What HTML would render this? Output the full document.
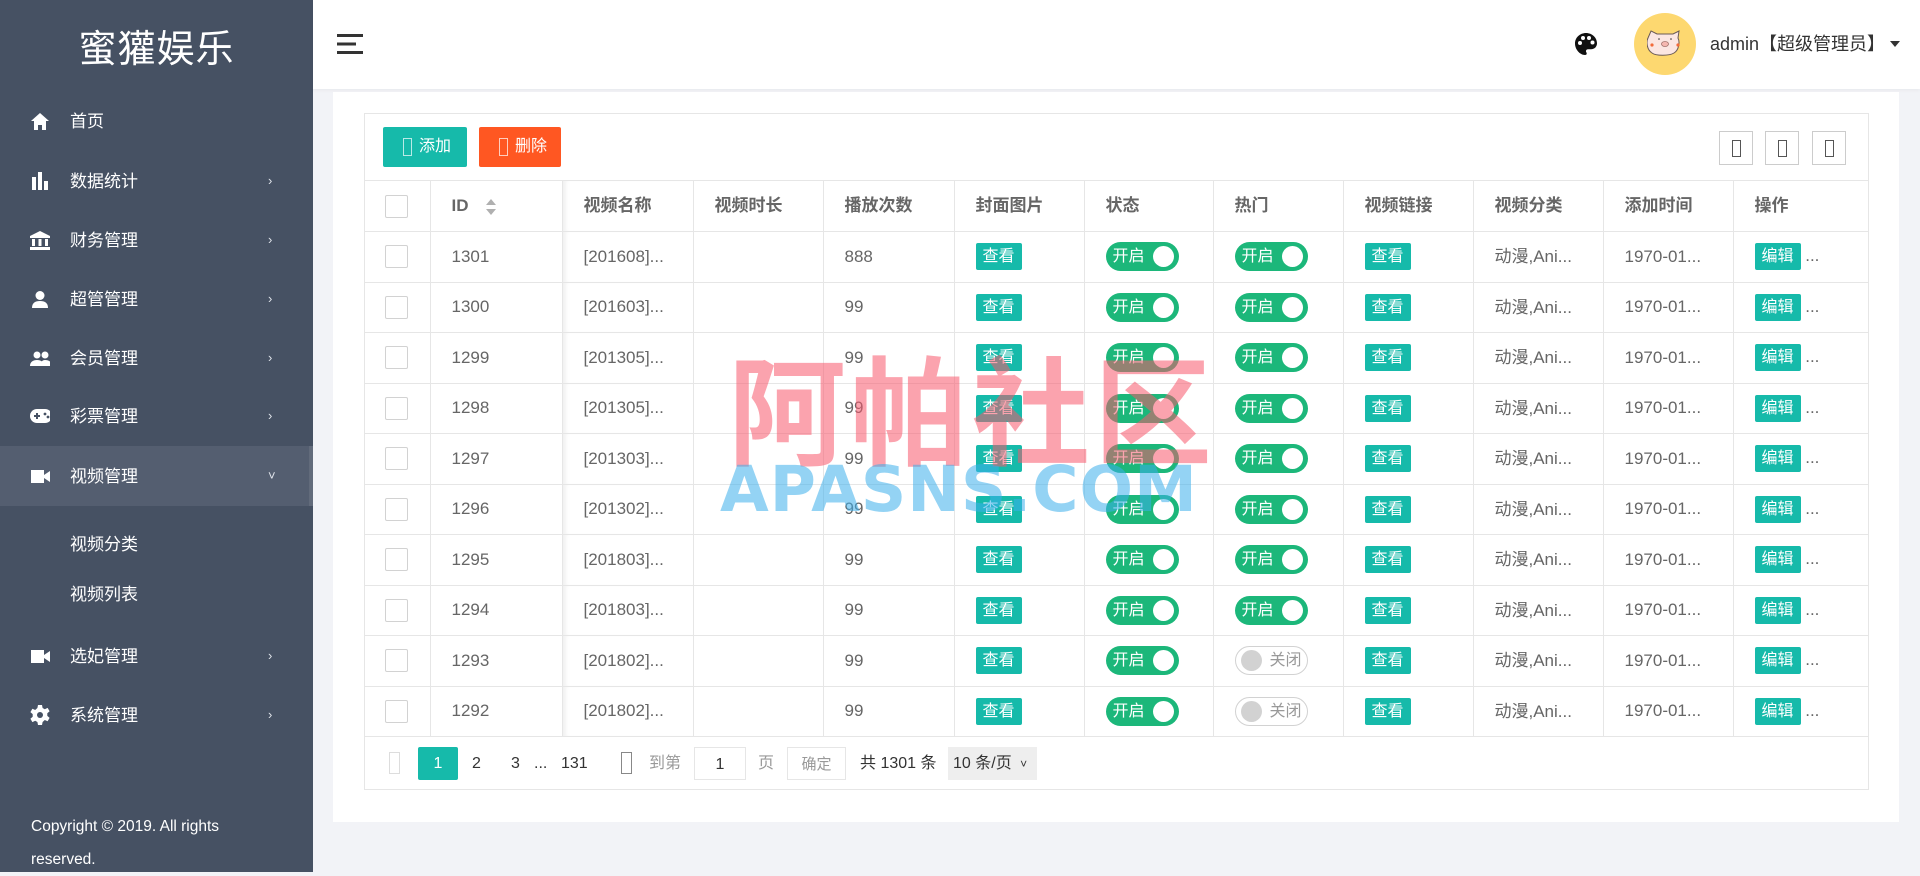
<!DOCTYPE html>
<html><head><meta charset="utf-8"><style>
*{margin:0;padding:0;box-sizing:border-box}
body{width:1920px;height:872px;overflow:hidden;background:#f2f3f7;font-family:"Liberation Sans","Noto Sans CJK SC",sans-serif;color:#666;position:relative}
.side{position:absolute;left:0;top:0;width:313px;height:872px;background:#465163;color:#fff}
.logo{position:absolute;top:18px;left:0;width:313px;text-align:center;font-size:38px;color:#fff;letter-spacing:1px}
.mi{position:absolute;left:0;width:313px;height:58px;line-height:58px;font-size:17px;color:#fff}
.mi .ic{position:absolute;left:30px;top:0;width:20px;height:58px;display:flex;align-items:center;justify-content:center}
.mi .tx{position:absolute;left:70px;top:1px}
.mi .ar{position:absolute;left:268px;font-size:13px;color:#dfe3ea}
.act{background:#545e70}
.sub{position:absolute;left:70px;font-size:17px;color:#fff}
.copy{position:absolute;left:31px;top:810px;font-size:15.5px;line-height:33px;color:#fff;width:220px}
.hdr{position:absolute;left:313px;top:0;width:1607px;height:89px;background:#fff;box-shadow:0 1px 4px rgba(0,0,0,.05)}
.card{position:absolute;left:333px;top:92px;width:1566px;height:730px;background:#fff}
.box{position:absolute;left:364px;top:113px;width:1505px;height:677px;border:1px solid #e6e6e6}
.btn{position:absolute;top:127px;height:40px;line-height:40px;color:#fff;font-size:16px;border-radius:2px;padding-left:20px}
.btn i{position:absolute;left:20px;top:11px;width:9px;height:18px;border:1px solid rgba(255,255,255,.7)}
.btn span{margin-left:16px}
.ti{position:absolute;top:131px;width:34px;height:34px;border:1px solid #ccc}
.ti i{position:absolute;left:12px;top:8px;width:9px;height:17px;border:1px solid #555}
table{position:absolute;left:364px;top:180px;border-collapse:collapse;table-layout:fixed;width:1505px}
td,th{border:1px solid #e6e6e6;height:50.5px;padding:0 0 0 21px;text-align:left;font-size:17px;line-height:22px;white-space:nowrap;overflow:hidden;vertical-align:middle}
th{height:51px;font-weight:bold;color:#666}
tr td:first-child,tr th:first-child{border-left:none}
tr td:last-child,tr th:last-child{border-right:none}
td.c3,th.c3{box-shadow:inset 6px 0 6px -4px rgba(0,0,0,.08)}
.cb{display:inline-block;width:23px;height:23px;border:1px solid #d2d2d2;border-radius:2px;vertical-align:middle;background:#fff}
.tag{display:inline-block;height:27px;line-height:27px;padding:0 7px;background:#16baaa;color:#fff;border-radius:2px;font-size:16px;vertical-align:middle}
.sw{display:inline-block;position:relative;width:73px;height:29px;border-radius:15px;background:#1cb77a;color:#fff;font-size:16px;line-height:29px;padding-left:7px;vertical-align:middle}
.sw::after{content:"";position:absolute;right:5px;top:4px;width:21px;height:21px;border-radius:50%;background:#fff}
.sw.off{background:#fff;border:1px solid #d2d2d2;color:#999;padding-left:34px;line-height:27px}
.sw.off::after{left:5px;right:auto;top:3px;background:#d2d2d2}
.cat{display:inline-block;vertical-align:middle;line-height:22px;height:22px}
.pg{position:absolute;top:747px;height:33px;line-height:33px;font-size:16px;color:#333}
.wm1{position:absolute;left:728px;top:340px;font-size:118px;font-weight:bold;color:rgba(248,88,108,.55);letter-spacing:4px;line-height:130px;font-family:"Noto Sans CJK SC",sans-serif}
.wm2{position:absolute;left:720px;top:458px;font-size:63px;font-weight:bold;color:rgba(60,175,235,.55);line-height:63px;letter-spacing:1px;font-family:"DejaVu Sans","Liberation Sans",sans-serif}
</style></head><body>
<div class="side">
<div class="logo">蜜獾娱乐</div>
<div class="mi" style="top:92px"><span class="ic"><svg width="18" height="17" viewBox="0 0 18 17"><path d="M9 0L0 8h3v9h4v-5h4v5h4V8h3z" fill="#fff"/></svg></span><span class="tx">首页</span></div>
<div class="mi" style="top:152px"><span class="ic"><svg width="18" height="18"><rect x="1" y="5" width="4" height="13" fill="#fff"/><rect x="7" y="0" width="4" height="18" fill="#fff"/><rect x="13" y="9" width="4" height="9" fill="#fff"/></svg></span><span class="tx">数据统计</span><span class="ar">›</span></div>
<div class="mi" style="top:211px"><span class="ic"><svg width="20" height="19"><path d="M10 0L0 5v2h20V5z M2 8h3v7H2z M8.5 8h3v7h-3z M15 8h3v7h-3z M0 16h20v3H0z" fill="#fff"/></svg></span><span class="tx">财务管理</span><span class="ar">›</span></div>
<div class="mi" style="top:270px"><span class="ic"><svg width="16" height="17"><circle cx="8" cy="4.5" r="4.5" fill="#fff"/><path d="M0 17c0-5 3-7 8-7s8 2 8 7z" fill="#fff"/></svg></span><span class="tx">超管管理</span><span class="ar">›</span></div>
<div class="mi" style="top:329px"><span class="ic"><svg width="22" height="15"><circle cx="7" cy="4" r="3.5" fill="#fff"/><circle cx="15" cy="4" r="3.5" fill="#fff"/><path d="M0 15c0-4 3-6 7-6s7 2 7 6z M10 15c1-4 2-6 5-6 4 0 7 2 7 6z" fill="#fff"/></svg></span><span class="tx">会员管理</span><span class="ar">›</span></div>
<div class="mi" style="top:387px"><span class="ic"><svg width="22" height="14"><rect x="0" y="0" width="22" height="14" rx="7" fill="#fff"/><rect x="4" y="6" width="6" height="2" fill="#465163"/><rect x="6" y="4" width="2" height="6" fill="#465163"/><circle cx="15" cy="5" r="1.4" fill="#465163"/><circle cx="18" cy="8" r="1.4" fill="#465163"/></svg></span><span class="tx">彩票管理</span><span class="ar">›</span></div>
<div class="mi act" style="top:446px;height:60px;line-height:60px"><span class="ic" style="height:60px"><svg width="19" height="13"><rect x="0" y="0" width="13" height="13" fill="#fff"/><path d="M13 5l6-4v11l-6-4z" fill="#fff"/></svg></span><span class="tx">视频管理</span><span class="ar">˅</span></div>
<div style="position:absolute;left:309px;top:446px;width:4px;height:60px;background:#626b7b"></div>
<div class="sub" style="top:530px">视频分类</div>
<div class="sub" style="top:580px">视频列表</div>
<div class="mi" style="top:627px"><span class="ic"><svg width="19" height="13"><rect x="0" y="0" width="13" height="13" fill="#fff"/><path d="M13 5l6-4v11l-6-4z" fill="#fff"/></svg></span><span class="tx">选妃管理</span><span class="ar">›</span></div>
<div class="mi" style="top:686px"><span class="ic"><svg width="20" height="20" viewBox="0 0 20 20"><path d="M8 0h4l.6 3 2.2 1.2 2.8-1.3 2 3.4-2.3 2v2.6l2.3 2-2 3.4-2.8-1.3L12.6 17 12 20H8l-.6-3-2.2-1.2-2.8 1.3-2-3.4 2.3-2V9.1L.4 7.1l2-3.4 2.8 1.3L7.4 3z" fill="#fff"/><circle cx="10" cy="10" r="3" fill="#465163"/></svg></span><span class="tx">系统管理</span><span class="ar">›</span></div>
<div class="copy">Copyright © 2019. All rights reserved.</div>
</div>
<div class="hdr">
<svg style="position:absolute;left:24px;top:34px" width="26" height="20"><rect y="0" width="26" height="3" fill="#333"/><rect y="8.5" width="19" height="3" fill="#333"/><rect y="17" width="26" height="3" fill="#333"/></svg>
<svg style="position:absolute;left:1262px;top:33px" width="22" height="22" viewBox="0 0 22 22"><path d="M11 0C5 0 0 4.5 0 10.5 0 16.5 5 22 10 22c2 0 2-1.5 1.3-2.7-.8-1.3 0-3 1.7-3H16c3.5 0 6-2.5 6-6C22 4.5 17 0 11 0z" fill="#111"/><circle cx="5" cy="10" r="2" fill="#fff"/><circle cx="8" cy="5" r="2" fill="#fff"/><circle cx="14" cy="5" r="2" fill="#fff"/><circle cx="17.5" cy="9.5" r="2" fill="#fff"/></svg>
<div style="position:absolute;left:1321px;top:13px;width:62px;height:62px;border-radius:50%;background:#fdd870"></div>
<svg style="position:absolute;left:1334px;top:29px" width="36" height="27" viewBox="0 0 36 27"><path d="M4 2l6 3h16l6-3-1 7c2 4 1 12-4 15-5 3-18 3-22 0-5-3-6-11-4-15z" fill="#fbe6e2" stroke="#6a5a55" stroke-width="1"/><ellipse cx="18" cy="15" rx="3.5" ry="2.5" fill="#f5b7b0" stroke="#a0706a" stroke-width=".8"/><circle cx="5" cy="16" r="1.6" fill="#f26b3a"/><circle cx="31" cy="16" r="1.6" fill="#f26b3a"/><circle cx="12" cy="10" r=".8" fill="#333"/><circle cx="24" cy="10" r=".8" fill="#333"/></svg>
<div style="position:absolute;left:1397px;top:31px;font-size:18px;color:#333;line-height:26px">admin【超级管理员】</div>
<div style="position:absolute;left:1577px;top:41px;width:0;height:0;border-left:5px solid transparent;border-right:5px solid transparent;border-top:6px solid #333"></div>
</div>
<div class="card"></div>
<div class="box"></div>
<div class="btn" style="left:383px;width:84px;background:#16baaa"><i></i><span>添加</span></div>
<div class="btn" style="left:479px;width:82px;background:#ff5722"><i></i><span>删除</span></div>
<div class="ti" style="left:1719px"><i></i></div>
<div class="ti" style="left:1765px"><i></i></div>
<div class="ti" style="left:1812px"><i></i></div>
<table>
<colgroup><col style="width:66px"><col style="width:132px"><col style="width:131px"><col style="width:130px"><col style="width:131px"><col style="width:130px"><col style="width:129px"><col style="width:130px"><col style="width:130px"><col style="width:130px"><col style="width:130px"><col style="width:136px"></colgroup>
<tr><th><span class="cb"></span></th><th>ID <span style="display:inline-block;vertical-align:middle;margin-left:12px;line-height:0"><svg width="12" height="16"><path d="M6 0l5 6H1z M6 16l5-6H1z" fill="#b0b0b0"/></svg></span></th><th class="c3">视频名称</th><th>视频时长</th><th>播放次数</th><th>封面图片</th><th>状态</th><th>热门</th><th>视频链接</th><th>视频分类</th><th>添加时间</th><th>操作</th></tr>
<tr><td><span class="cb"></span></td><td>1301</td><td class="c3">[201608]...</td><td></td><td>888</td><td><span class="tag">查看</span></td><td><span class="sw">开启</span></td><td><span class="sw">开启</span></td><td><span class="tag">查看</span></td><td><span class="cat">动漫,Ani...</span></td><td>1970-01...</td><td><span class="tag">编辑</span> ...</td></tr>
<tr><td><span class="cb"></span></td><td>1300</td><td class="c3">[201603]...</td><td></td><td>99</td><td><span class="tag">查看</span></td><td><span class="sw">开启</span></td><td><span class="sw">开启</span></td><td><span class="tag">查看</span></td><td><span class="cat">动漫,Ani...</span></td><td>1970-01...</td><td><span class="tag">编辑</span> ...</td></tr>
<tr><td><span class="cb"></span></td><td>1299</td><td class="c3">[201305]...</td><td></td><td>99</td><td><span class="tag">查看</span></td><td><span class="sw">开启</span></td><td><span class="sw">开启</span></td><td><span class="tag">查看</span></td><td><span class="cat">动漫,Ani...</span></td><td>1970-01...</td><td><span class="tag">编辑</span> ...</td></tr>
<tr><td><span class="cb"></span></td><td>1298</td><td class="c3">[201305]...</td><td></td><td>99</td><td><span class="tag">查看</span></td><td><span class="sw">开启</span></td><td><span class="sw">开启</span></td><td><span class="tag">查看</span></td><td><span class="cat">动漫,Ani...</span></td><td>1970-01...</td><td><span class="tag">编辑</span> ...</td></tr>
<tr><td><span class="cb"></span></td><td>1297</td><td class="c3">[201303]...</td><td></td><td>99</td><td><span class="tag">查看</span></td><td><span class="sw">开启</span></td><td><span class="sw">开启</span></td><td><span class="tag">查看</span></td><td><span class="cat">动漫,Ani...</span></td><td>1970-01...</td><td><span class="tag">编辑</span> ...</td></tr>
<tr><td><span class="cb"></span></td><td>1296</td><td class="c3">[201302]...</td><td></td><td>99</td><td><span class="tag">查看</span></td><td><span class="sw">开启</span></td><td><span class="sw">开启</span></td><td><span class="tag">查看</span></td><td><span class="cat">动漫,Ani...</span></td><td>1970-01...</td><td><span class="tag">编辑</span> ...</td></tr>
<tr><td><span class="cb"></span></td><td>1295</td><td class="c3">[201803]...</td><td></td><td>99</td><td><span class="tag">查看</span></td><td><span class="sw">开启</span></td><td><span class="sw">开启</span></td><td><span class="tag">查看</span></td><td><span class="cat">动漫,Ani...</span></td><td>1970-01...</td><td><span class="tag">编辑</span> ...</td></tr>
<tr><td><span class="cb"></span></td><td>1294</td><td class="c3">[201803]...</td><td></td><td>99</td><td><span class="tag">查看</span></td><td><span class="sw">开启</span></td><td><span class="sw">开启</span></td><td><span class="tag">查看</span></td><td><span class="cat">动漫,Ani...</span></td><td>1970-01...</td><td><span class="tag">编辑</span> ...</td></tr>
<tr><td><span class="cb"></span></td><td>1293</td><td class="c3">[201802]...</td><td></td><td>99</td><td><span class="tag">查看</span></td><td><span class="sw">开启</span></td><td><span class="sw off">关闭</span></td><td><span class="tag">查看</span></td><td><span class="cat">动漫,Ani...</span></td><td>1970-01...</td><td><span class="tag">编辑</span> ...</td></tr>
<tr><td><span class="cb"></span></td><td>1292</td><td class="c3">[201802]...</td><td></td><td>99</td><td><span class="tag">查看</span></td><td><span class="sw">开启</span></td><td><span class="sw off">关闭</span></td><td><span class="tag">查看</span></td><td><span class="cat">动漫,Ani...</span></td><td>1970-01...</td><td><span class="tag">编辑</span> ...</td></tr>
</table>
<div class="pg" style="left:389px;top:752px;width:11px;height:22px;border:1px solid #ddd"></div>
<div class="pg" style="left:418px;width:40px;background:#16baaa;color:#fff;text-align:center;border-radius:2px">1</div>
<div class="pg" style="left:472px">2</div>
<div class="pg" style="left:511px">3</div>
<div class="pg" style="left:534px">...</div>
<div class="pg" style="left:561px">131</div>
<div class="pg" style="left:621px;top:752px;width:11px;height:22px;border:1px solid #888"></div>
<div class="pg" style="left:649px;color:#999">到第</div>
<div class="pg" style="left:694px;width:52px;border:1px solid #e6e6e6;text-align:center">1</div>
<div class="pg" style="left:758px;color:#999">页</div>
<div class="pg" style="left:787px;width:59px;border:1px solid #e6e6e6;text-align:center;color:#999;font-size:15px">确定</div>
<div class="pg" style="left:860px">共 1301 条</div>
<div class="pg" style="left:948px;width:89px;background:#eee;padding-left:5px">10 条/页 <span style="font-size:12px;margin-left:4px">˅</span></div>
<div class="wm1">阿帕社区</div>
<div class="wm2">APASNS.COM</div>
</body></html>
